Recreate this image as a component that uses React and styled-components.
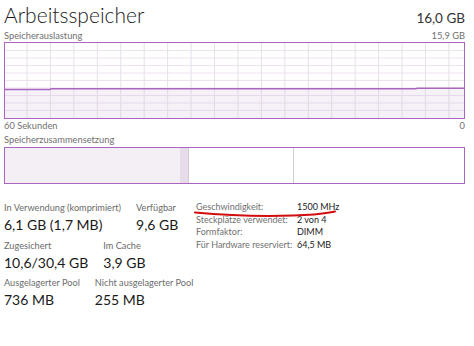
import React from 'react'
import styled, { createGlobalStyle } from 'styled-components'

const Global = createGlobalStyle`
  html, body { margin: 0; padding: 0; background: #fff; }
  body { font-family: "Segoe UI", Lato, "Open Sans", sans-serif; color: #1a1a1a; }
`

const PURPLE = '#a866bf'

const Page = styled.div`
  width: 474px;
  height: 346px;
  box-sizing: border-box;
  padding: 0 9px 0 4px;
  overflow: hidden;
`

const Header = styled.div`
  display: flex;
  justify-content: space-between;
  align-items: baseline;
  height: 30px;
`

const Title = styled.h1`
  margin: 0;
  font-size: 21px;
  font-weight: 300;
  line-height: 29px;
`

const Total = styled.span`
  font-size: 13.5px;
  font-weight: 400;
  color: #333;
`

const CaptionRow = styled.div`
  display: flex;
  justify-content: space-between;
  font-size: 9.3px;
  line-height: 12px;
  color: #707070;
  margin-top: ${p => p.$top || 0}px;
`

const ChartBox = styled.div`
  height: 75px;
  border: 1px solid ${PURPLE};
  background: #fff;
  svg { display: block; }
`

const CompBar = styled.div`
  display: flex;
  height: 35px;
  border: 1px solid ${PURPLE};
  margin-top: 1px;
`

const Segment = styled.div`
  width: ${p => p.$w}px;
  flex: ${p => (p.$grow ? 1 : 'none')};
  background: ${p => p.$bg};
  border-right: ${p => (p.$sep ? `1px solid ${p.$sep}` : 'none')};
`

const Stats = styled.div`
  display: flex;
  margin-top: 17px;
`

const LeftStats = styled.div`
  width: 192px;
  flex: none;
  display: flex;
  flex-direction: column;
  gap: 3.5px;
`

const StatRow = styled.div`
  display: flex;
  gap: 15px;
`

const Stat = styled.div`
  display: flex;
  flex-direction: column;
`

const Label = styled.span`
  font-size: 9.2px;
  line-height: 13px;
  color: #6b6b6b;
  white-space: nowrap;
`

const Value = styled.span`
  font-size: 14px;
  line-height: 21px;
  color: #1a1a1a;
  white-space: nowrap;
`

const Details = styled.div`
  display: grid;
  grid-template-columns: 101px auto;
  align-content: start;
  position: relative;
`

const DLabel = styled.span`
  font-size: 9px;
  line-height: 12.7px;
  color: #707070;
  white-space: nowrap;
`

const DValue = styled(DLabel)`
  color: #1a1a1a;
`

const Scribble = styled.svg`
  position: absolute;
  left: -3px;
  top: 7px;
  pointer-events: none;
`

function UsageChart() {
  const w = 459
  const h = 75
  const vlines = []
  for (let i = 0; i < 19; i++) vlines.push(22 + i * 23.44)
  const hlines = []
  for (let i = 1; i < 10; i++) hlines.push(i * 7.5)
  const line = `M0 46.5 L45 46.5 L46 45.8 L411 45.8 L412 45.3 L${w} 45.3`
  return (
    <svg width={w} height={h} viewBox={`0 0 ${w} ${h}`}>
      {hlines.map(y => (
        <line key={'h' + y} x1="0" x2={w} y1={y} y2={y} stroke="#ece3ef" strokeWidth="1" />
      ))}
      {vlines.map(x => (
        <line key={'v' + x} x1={x} x2={x} y1="0" y2={h} stroke="#e7dfea" strokeWidth="1" />
      ))}
      <path d={`${line} L${w} ${h} L0 ${h} Z`} fill="#f3eff5" fillOpacity="0.85" />
      {hlines.filter(y => y > 46).map(y => (
        <line key={'hh' + y} x1="0" x2={w} y1={y} y2={y} stroke="#e6dbea" strokeWidth="1" />
      ))}
      {vlines.map(x => (
        <line key={'vv' + x} x1={x} x2={x} y1="46" y2={h} stroke="#e3d9e7" strokeWidth="1" />
      ))}
      <path d={line} fill="none" stroke={PURPLE} strokeWidth="1.4" />
    </svg>
  )
}

export default function App() {
  return (
    <Page>
      <Global />
      <Header>
        <Title>Arbeitsspeicher</Title>
        <Total>16,0 GB</Total>
      </Header>
      <CaptionRow>
        <span>Speicherauslastung</span>
        <span>15,9 GB</span>
      </CaptionRow>
      <ChartBox>
        <UsageChart />
      </ChartBox>
      <CaptionRow $top={1}>
        <span>60 Sekunden</span>
        <span>0</span>
      </CaptionRow>
      <CaptionRow $top={2}>
        <span>Speicherzusammensetzung</span>
      </CaptionRow>
      <CompBar>
        <Segment $w={175} $bg="#f3eff5" />
        <Segment $w={8} $bg="#e6dcea" $sep="#d6c9dc" />
        <Segment $w={104} $bg="#fff" $sep="#cfcfcf" />
        <Segment $grow $bg="#fff" />
      </CompBar>
      <Stats>
        <LeftStats>
          <StatRow>
            <Stat>
              <Label>In Verwendung (komprimiert)</Label>
              <Value>6,1 GB (1,7 MB)</Value>
            </Stat>
            <Stat>
              <Label>Verfügbar</Label>
              <Value>9,6 GB</Value>
            </Stat>
          </StatRow>
          <StatRow>
            <Stat>
              <Label>Zugesichert</Label>
              <Value>10,6/30,4 GB</Value>
            </Stat>
            <Stat>
              <Label>Im Cache</Label>
              <Value>3,9 GB</Value>
            </Stat>
          </StatRow>
          <StatRow>
            <Stat>
              <Label>Ausgelagerter Pool</Label>
              <Value>736 MB</Value>
            </Stat>
            <Stat>
              <Label>Nicht ausgelagerter Pool</Label>
              <Value>255 MB</Value>
            </Stat>
          </StatRow>
        </LeftStats>
        <Details>
          <DLabel>Geschwindigkeit:</DLabel>
          <DValue>1500 MHz</DValue>
          <DLabel>Steckplätze verwendet:</DLabel>
          <DValue>2 von 4</DValue>
          <DLabel>Formfaktor:</DLabel>
          <DValue>DIMM</DValue>
          <DLabel>Für Hardware reserviert:</DLabel>
          <DValue>64,5 MB</DValue>
          <Scribble width="150" height="10" viewBox="0 0 150 10">
            <path d="M2 4.5 C40 8, 70 8.5, 100 7.5 S132 5, 142 3.5" fill="none" stroke="#d10d0d" strokeWidth="2" strokeLinecap="round" />
          </Scribble>
        </Details>
      </Stats>
    </Page>
  )
}
